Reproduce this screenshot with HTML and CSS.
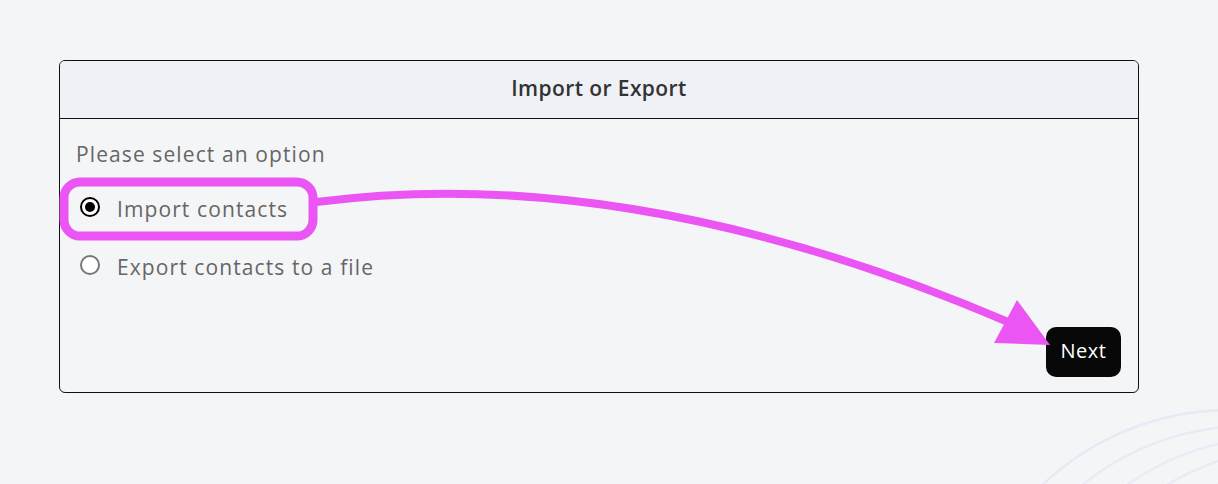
FILE: index.html
```html
<!DOCTYPE html>
<html lang="en">
<head>
<meta charset="utf-8">
<title>Import or Export</title>
<link rel="stylesheet" href="styles.css">
</head>
<body>
<svg class="bg-deco" width="220" height="110" viewBox="1000 376 220 110">
  <circle cx="1232" cy="684" r="272" fill="none" stroke="#e4eaf6" stroke-width="2.5"/>
  <circle cx="1250" cy="690" r="262" fill="none" stroke="#e6ebf6" stroke-width="2.5"/>
  <circle cx="1275" cy="690" r="250" fill="none" stroke="#e7ecf6" stroke-width="2.5"/>
  <circle cx="1300" cy="700" r="250" fill="none" stroke="#e6ebf6" stroke-width="2.5"/>
  <circle cx="1330" cy="700" r="240" fill="none" stroke="#e7ecf6" stroke-width="2.5"/>
</svg>
<div class="card">
  <div class="card-header">Import or Export</div>
  <div class="card-body">
    <p class="prompt">Please select an option</p>
    <div class="options">
      <label class="option">
        <span class="radio checked"></span>
        <span class="label">Import contacts</span>
      </label>
      <label class="option">
        <span class="radio"></span>
        <span class="label">Export contacts to a file</span>
      </label>
    </div>
    <div class="actions">
      <button class="btn-next">Next</button>
    </div>
  </div>
</div>
<svg class="annot" width="1218" height="484" viewBox="0 0 1218 484">
  <rect x="64" y="182" width="249" height="54" rx="16" ry="16" fill="none" stroke="#ea55f4" stroke-width="9"/>
  <path d="M316 202 C 470 182 700 190 1008 322" fill="none" stroke="#ea55f4" stroke-width="8"/>
  <polygon points="1017,300 994,343 1050,345" fill="#ea55f4"/>
</svg>
</body>
</html>
```

FILE: styles.css
```css
html, body {
  margin: 0;
  padding: 0;
}
body {
  background: #f4f5f7;
  font-family: "Open Sans", "DejaVu Sans", sans-serif;
  width: 1218px;
  height: 484px;
  position: relative;
  overflow: hidden;
  padding-top: 60px;
  box-sizing: border-box;
}
.bg-deco {
  position: absolute;
  right: 0;
  bottom: 0;
}
.annot {
  position: absolute;
  left: 0;
  top: 0;
  pointer-events: none;
}
.card {
  position: relative;
  margin-left: 59px;
  width: 1080px;
  height: 333px;
  box-sizing: border-box;
  border: 1px solid #111;
  border-radius: 6px;
  display: flex;
  flex-direction: column;
  overflow: hidden;
}
.card-header {
  height: 58px;
  padding-bottom: 3px;
  box-sizing: border-box;
  background: #eef1f6;
  border-bottom: 1px solid #111;
  display: flex;
  align-items: center;
  justify-content: center;
  font-weight: 600;
  font-size: 21px;
  color: #333;
  letter-spacing: 0.4px;
}
.card-body {
  flex: 1;
  padding: 18px 16px 15px 16px;
  display: flex;
  flex-direction: column;
}
.prompt {
  margin: 0;
  font-size: 21px;
  line-height: 34px;
  color: #666;
  letter-spacing: 1.1px;
}
.options {
  margin-top: 9px;
  display: flex;
  flex-direction: column;
}
.option {
  display: flex;
  align-items: center;
  height: 58px;
  gap: 17px;
  padding-left: 4px;
}
.radio {
  width: 20px;
  height: 20px;
  box-sizing: border-box;
  border-radius: 50%;
  border: 2px solid #777;
  background: #fff;
  position: relative;
  margin-top: -4px;
}
.radio.checked {
  border-color: #000;
}
.radio.checked::after {
  content: "";
  position: absolute;
  left: 3px;
  top: 3px;
  width: 10px;
  height: 10px;
  border-radius: 50%;
  background: #000;
}
.label {
  font-size: 21px;
  color: #666;
  letter-spacing: 1.1px;
}
.actions {
  margin-top: auto;
  display: flex;
  justify-content: flex-end;
  padding-right: 1px;
}
.btn-next {
  width: 75px;
  height: 50px;
  border: none;
  border-radius: 10px;
  background: #080808;
  color: #fff;
  font-family: "Open Sans", "DejaVu Sans", sans-serif;
  font-size: 20px;
  letter-spacing: 0.5px;
  padding: 0 0 4px 0;
}
```
